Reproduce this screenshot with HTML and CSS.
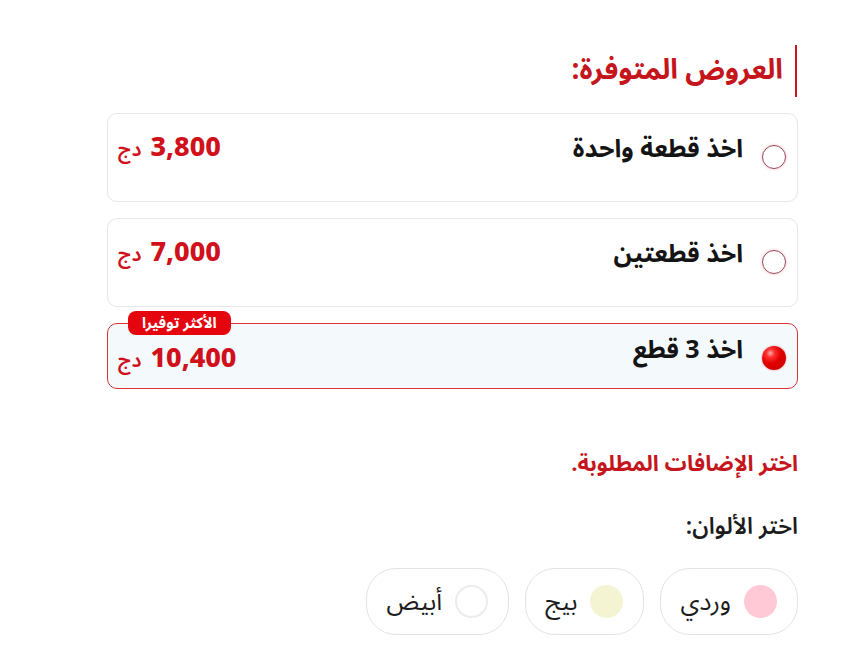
FILE: index.html
```html
<!DOCTYPE html>
<html lang="ar" dir="rtl">
<head>
<meta charset="utf-8">
<title>العروض المتوفرة</title>
<link rel="stylesheet" href="styles.css">
</head>
<body>
<main class="page">
  <h2 class="section-title">العروض المتوفرة:</h2>

  <div class="offers">
    <label class="offer">
      <div class="offer-row">
        <span class="radio"></span>
        <span class="offer-name">اخذ قطعة واحدة</span>
        <span class="offer-price"><b>3,800</b> <small>دج</small></span>
      </div>
    </label>

    <label class="offer">
      <div class="offer-row">
        <span class="radio"></span>
        <span class="offer-name">اخذ قطعتين</span>
        <span class="offer-price"><b>7,000</b> <small>دج</small></span>
      </div>
    </label>

    <label class="offer offer--active">
      <span class="badge">الأكثر توفيرا</span>
      <div class="offer-row">
        <span class="radio radio--checked"></span>
        <span class="offer-name">اخذ 3 قطع</span>
        <span class="offer-price offer-price--low"><b>10,400</b> <small>دج</small></span>
      </div>
    </label>
  </div>

  <h3 class="addons-title">اختر الإضافات المطلوبة.</h3>

  <h4 class="colors-title">اختر الألوان:</h4>

  <div class="colors">
    <button class="color-pill"><span class="swatch swatch--pink"></span><span class="color-name">وردي</span></button>
    <button class="color-pill"><span class="swatch swatch--beige"></span><span class="color-name">بيج</span></button>
    <button class="color-pill"><span class="swatch swatch--white"></span><span class="color-name">أبيض</span></button>
  </div>
</main>
</body>
</html>
```

FILE: styles.css
```css
* { box-sizing: border-box; }

html, body {
  margin: 0;
  background: #ffffff;
}

body {
  font-family: "Noto Sans Arabic", "Noto Kufi Arabic", "DejaVu Sans", sans-serif;
  color: #1a1a1a;
}

.page {
  margin: 0 49px 0 107px;
  padding-top: 45px;
  display: flex;
  flex-direction: column;
}

.section-title {
  margin: 0 1px 0 0;
  font-size: 28px;
  font-weight: 700;
  color: #c4161c;
  border-right: 2px solid #c4161c;
  padding: 9px 12px 9px 0;
  line-height: 34px;
}

.offers {
  margin-top: 16px;
  display: flex;
  flex-direction: column;
  gap: 16px;
}

.offer {
  position: relative;
  display: block;
  border: 1px solid #e6e6e6;
  border-radius: 10px;
  background: #ffffff;
  padding: 20px 10px 0 10px;
  height: 89px;
}

.offer--active {
  border-color: #d9343a;
  background: #f4f9fc;
  height: 66px;
  padding-top: 11px;
}

.offer-row {
  display: flex;
  align-items: flex-start;
}

.radio {
  width: 24px;
  height: 24px;
  border-radius: 50%;
  border: 1.5px solid #9a4656;
  box-shadow: 0 0 3px rgba(230, 60, 60, 0.35);
  margin-top: 11px;
  margin-right: 1px;
  flex: none;
}

.radio--checked {
  border: none;
  background: radial-gradient(circle at 35% 30%, #ffb0b0 0, #ff3030 18%, #e00000 45%, #c80000 100%);
  box-shadow: 0 0 2px rgba(200, 0, 0, 0.5);
}

.offer-name {
  margin-right: 19px;
  font-size: 25px;
  font-weight: 700;
  line-height: 30px;
  color: #141414;
}

.offer-price {
  margin-right: auto;
  margin-top: -3px;
  line-height: 30px;
  color: #d0101a;
  display: flex;
  align-items: baseline;
  gap: 9px;
  direction: rtl;
}

.offer-price--low {
  margin-top: 7px;
}

.offer-price b {
  font-family: "Noto Sans", "DejaVu Sans", sans-serif;
  font-size: 27px;
  font-weight: 800;
  direction: ltr;
}

.offer-price small {
  font-size: 20px;
  font-weight: 600;
}

.badge {
  position: absolute;
  top: -13px;
  left: 20px;
  background: #e5050f;
  color: #ffffff;
  font-size: 15px;
  font-weight: 700;
  line-height: 24px;
  padding: 0 14px;
  border-radius: 8px;
}

.addons-title {
  margin: 60px 0 0 0;
  font-size: 22px;
  font-weight: 700;
  color: #c4161c;
  line-height: 30px;
}

.colors-title {
  margin: 33px 0 0 0;
  font-size: 23px;
  font-weight: 600;
  color: #1c1c1c;
  line-height: 30px;
}

.colors {
  margin-top: 26px;
  display: flex;
  gap: 16px;
}

.color-pill {
  font-family: inherit;
  display: flex;
  align-items: center;
  gap: 13px;
  height: 67px;
  padding: 0 20px 0 19px;
  border: 1px solid #e3e3e3;
  border-radius: 30px;
  background: #ffffff;
  direction: rtl;
}

.swatch {
  width: 33px;
  height: 33px;
  border-radius: 50%;
  flex: none;
}

.swatch--pink { background: #ffc9d5; }
.swatch--beige { background: #f4f3d2; }
.swatch--white { background: #ffffff; border: 2px solid #ececec; }

.color-name {
  font-size: 25px;
  color: #1c1c1c;
}
```
